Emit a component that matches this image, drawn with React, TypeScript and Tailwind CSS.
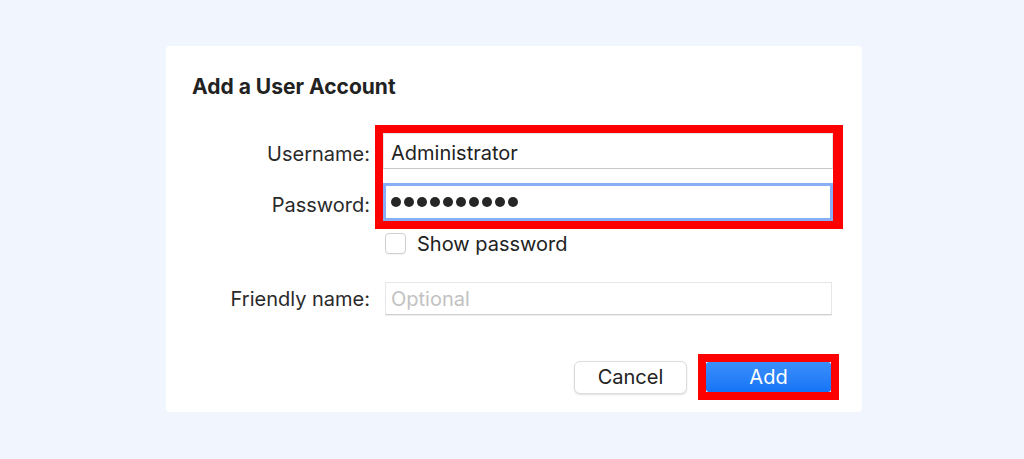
import React from "react";

const font = { fontFamily: "Inter, 'Noto Sans', sans-serif" };

export default function App() {
  return (
    <div
      className="w-[1024px] h-[459px] bg-[#f1f5fd] pt-[46px] pl-[166px] text-[#222]"
      style={font}
    >
      <div className="w-[696px] h-[366px] bg-white rounded-[4px] pt-[29px] pl-[26px]">
        <h1 className="text-[21px] leading-[24px] font-bold text-[#222]">
          Add a User Account
        </h1>

        <div className="mt-[26px] flex">
          <div className="w-[178px] flex flex-col items-end pt-[17px] gap-[27px] text-[20px] leading-[24px] text-[#2a2a2a]">
            <span>Username:</span>
            <span>Password:</span>
          </div>
          <div className="ml-[5px] w-[468px] border-[8px] border-r-[10px] border-[#ff0000] bg-white flex flex-col gap-[14px]">
            <div className="h-[36px] border border-[#e4e4e4] border-b-[#c9c9c9] flex items-center pl-[7px] pt-[3px] text-[20px] text-[#222]">
              Administrator
            </div>
            <div className="h-[38px] border-[3px] border-[#86aff5] flex items-center pl-[5px] gap-[3px]">
              {Array.from({ length: 10 }).map((_, i) => (
                <span key={i} className="w-[10px] h-[10px] rounded-full bg-[#262626]" />
              ))}
            </div>
          </div>
        </div>

        <div className="mt-[4px] ml-[193px] flex items-center h-[21px]">
          <span className="w-[21px] h-[21px] rounded-[4px] border border-[#cfcfcf] bg-white shadow-[0_1px_1px_rgba(0,0,0,0.05)]" />
          <span className="ml-[11px] text-[20px] leading-[24px] text-[#222]">Show password</span>
        </div>

        <div className="mt-[28px] flex items-center">
          <span className="w-[178px] text-right text-[20px] leading-[24px] text-[#2a2a2a]">
            Friendly name:
          </span>
          <div className="ml-[15px] w-[447px] h-[33px] border border-[#e6e6e6] border-b-[#cfcfcf] shadow-[0_1px_0_rgba(0,0,0,0.06)] flex items-center pl-[5px] text-[20px] text-[#c2c2c2]">
            Optional
          </div>
        </div>

        <div className="mt-[39px] flex justify-end items-center pr-[23px]">
          <button className="w-[113px] h-[33px] rounded-[6px] border border-[#dcdcdc] bg-white shadow-[0_1px_2px_rgba(0,0,0,0.12)] text-[20px] text-[#222]">
            Cancel
          </button>
          <div className="ml-[11px] border-[8px] border-[#ff0000]">
            <button className="w-[125px] h-[30px] rounded-[3px] bg-gradient-to-b from-[#3b8ffb] to-[#1474f6] text-white text-[20px] leading-[30px]">
              Add
            </button>
          </div>
        </div>
      </div>
    </div>
  );
}
